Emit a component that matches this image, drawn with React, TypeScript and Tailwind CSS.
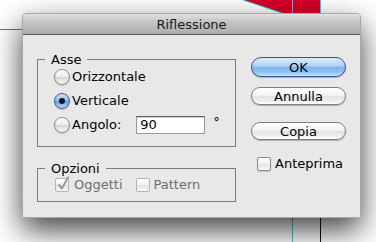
import React from "react";

function Radio({ checked = false }: { checked?: boolean }) {
  return (
    <span
      className={
        checked
          ? "flex h-[16px] w-[16px] shrink-0 items-center justify-center rounded-full border border-[#3d5c99] bg-[linear-gradient(to_bottom,#cfe3f8_0%,#8dbbec_48%,#649fe4_52%,#b6d8fa_100%)] shadow-[0_1px_1px_rgba(0,0,0,0.2)]"
          : "flex h-[16px] w-[16px] shrink-0 items-center justify-center rounded-full border border-[#8a8a8a] bg-[linear-gradient(to_bottom,#ffffff_0%,#ececec_48%,#d8d8d8_52%,#f6f6f6_100%)] shadow-[0_1px_1px_rgba(0,0,0,0.15)]"
      }
    >
      {checked && <span className="h-[6px] w-[6px] rounded-full bg-[#161616]" />}
    </span>
  );
}

function Checkbox({ checked = false, disabled = false }: { checked?: boolean; disabled?: boolean }) {
  return (
    <span
      className={
        "relative flex h-[14px] w-[14px] shrink-0 rounded-[2px] border bg-[linear-gradient(to_bottom,#ffffff_0%,#f0f0f0_50%,#e2e2e2_52%,#f8f8f8_100%)] " +
        (disabled ? "border-[#b4b4b4]" : "border-[#8a8a8a] shadow-[0_1px_1px_rgba(0,0,0,0.15)]")
      }
    >
      {checked && (
        <svg className="absolute -top-[3px] left-[1px]" width="13" height="15" viewBox="0 0 13 15">
          <path d="M2 9 L5 12.5 L11 1.5" fill="none" stroke="#9a9a9a" strokeWidth="2" strokeLinecap="round" strokeLinejoin="round" />
        </svg>
      )}
    </span>
  );
}

function AquaButton({ label, primary = false, tall = false }: { label: string; primary?: boolean; tall?: boolean }) {
  return (
    <button
      className={
        "flex w-full items-center justify-center rounded-full border text-[13px] leading-none text-black shadow-[0_1px_1px_rgba(0,0,0,0.25)] " +
        (tall ? "h-[20px] " : "h-[18px] ") +
        (primary
          ? "border-[#34549a] bg-[linear-gradient(to_bottom,#dcebfb_0%,#b0d0f3_45%,#7fb4ec_52%,#8fc1f1_78%,#c8e4fd_100%)]"
          : "border-[#7e7e7e] bg-[linear-gradient(to_bottom,#ffffff_0%,#f4f4f4_45%,#e4e4e4_52%,#ececec_78%,#ffffff_100%)]")
      }
    >
      {label}
    </button>
  );
}

export default function App() {
  return (
    <div className="relative h-[242px] w-[376px] overflow-hidden bg-white font-['DejaVu_Sans',sans-serif] text-[13px] text-black">
      {/* canvas behind the dialog */}
      <svg className="absolute inset-0" width="376" height="242" viewBox="0 0 376 242">
        <rect x="0" y="29" width="22" height="1" fill="#4a70f0" />
        <polygon points="243,0 321,0 321,22 309,22" fill="#d8002a" />
        <line x1="243" y1="0" x2="309" y2="22" stroke="#1fd6ea" strokeWidth="1" />
        <rect x="292" y="0" width="1" height="242" fill="#1fd6ea" />
        <rect x="320" y="0" width="1" height="22" fill="#1fd6ea" />
        <rect x="320" y="200" width="1" height="42" fill="#111111" />
      </svg>

      <div className="relative pl-[22px] pt-[13px]">
        <div className="flex h-[205px] w-[339px] flex-col overflow-hidden rounded-t-[4px] border border-[#a8a8a8] bg-[#e8e8e8] shadow-[0_12px_30px_rgba(0,0,0,0.75)]">
          {/* title bar */}
          <div className="h-[21px] shrink-0 border-b border-[#555555] bg-[linear-gradient(to_bottom,#e2e2e2_0%,#c4c4c4_40%,#acacac_100%)] text-center leading-[21px] text-[#1a1a1a]">
            Riflessione
          </div>

          <div className="flex items-start px-[14px]">
            {/* left column */}
            <div className="flex w-[199px] flex-col pt-[17px]">
              <fieldset className="border border-[#7c7c7c] p-0 pb-[11px]">
                <legend className="ml-[7px] px-[6px] leading-[15px]">Asse</legend>
                <div className="flex flex-col gap-[4px] pl-[16px]">
                  <div className="flex h-[20px] items-center">
                    <Radio />
                    <span className="ml-[2px]">Orizzontale</span>
                  </div>
                  <div className="flex h-[20px] items-center">
                    <Radio checked />
                    <span className="ml-[2px]">Verticale</span>
                  </div>
                  <div className="flex h-[20px] items-center">
                    <Radio />
                    <span className="ml-[2px]">Angolo:</span>
                    <div className="ml-[15px] flex h-[18px] w-[69px] items-center border border-[#9a9a9a] border-t-[#5f5f5f] bg-white pl-[3px] shadow-[inset_0_1px_1px_rgba(0,0,0,0.2)]">
                      90
                    </div>
                    <span className="ml-[8px] self-start leading-[14px]">°</span>
                  </div>
                </div>
              </fieldset>

              <fieldset className="mt-[14px] border border-[#7c7c7c] p-0 pb-[7px]">
                <legend className="ml-[7px] px-[6px] leading-[15px]">Opzioni</legend>
                <div className="flex h-[18px] items-center pl-[17px] text-[#6e6e6e]">
                  <Checkbox checked disabled />
                  <span className="ml-[5px]">Oggetti</span>
                  <span className="ml-[13px]">
                    <Checkbox disabled />
                  </span>
                  <span className="ml-[4px]">Pattern</span>
                </div>
              </fieldset>
            </div>

            {/* right column */}
            <div className="ml-[15px] flex w-[95px] flex-col pt-[22px]">
              <AquaButton label="OK" primary tall />
              <div className="mt-[10px]">
                <AquaButton label="Annulla" />
              </div>
              <div className="mt-[17px]">
                <AquaButton label="Copia" />
              </div>
              <div className="mt-[17px] flex h-[14px] items-center pl-[6px]">
                <Checkbox />
                <span className="ml-[4px]">Anteprima</span>
              </div>
            </div>
          </div>
        </div>
      </div>
    </div>
  );
}
